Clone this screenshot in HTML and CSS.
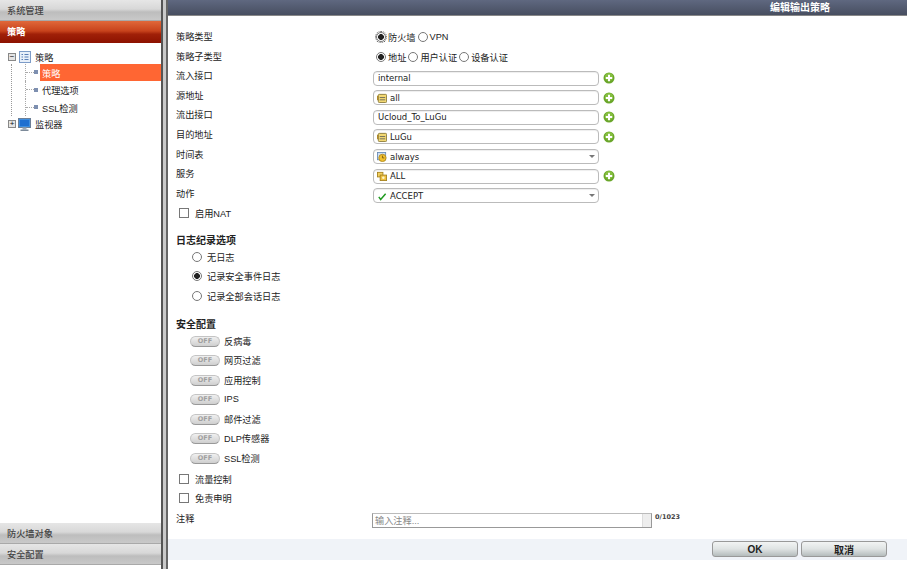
FILE: index.html
```html
<!DOCTYPE html>
<html lang="zh-CN">
<head>
  <meta charset="UTF-8">
  <title>编辑输出策略</title>
  <link rel="stylesheet" href="styles.css">
</head>
<body>
  <svg width="0" height="0" class="defs">
    <symbol id="plus" viewBox="0 0 12 12">
      <circle cx="6" cy="6" r="5.5" fill="#6aa62a"/>
      <circle cx="6" cy="5" r="4" fill="#86bf3f"/>
      <path d="M6 2.8v6.4M2.8 6h6.4" stroke="#fff" stroke-width="2"/>
    </symbol>
    <symbol id="addr" viewBox="0 0 11 11">
      <rect x="1.5" y="1.5" width="9" height="9" rx="1" fill="#f3d873" stroke="#8a7a3a"/>
      <path d="M3 5h6M3 7.5h6" stroke="#6b6b58"/>
      <rect x="0" y="3" width="1.5" height="5" fill="#b08a2a"/>
    </symbol>
  </svg>

  <aside class="sidebar">
    <div class="acc">系统管理</div>
    <div class="acc acc-active">策略</div>
    <div class="tree">
      <div class="tree-row top">
        <span class="box">−</span>
        <svg class="tree-icon" width="12" height="12" viewBox="0 0 12 12">
          <rect x="0.5" y="0.5" width="11" height="11" fill="#e8f0fa" stroke="#7d9cc8"/>
          <path d="M2.5 3.5h1.5M2.5 6h1.5M2.5 8.5h1.5M5.5 3.5h4M5.5 6h4M5.5 8.5h4" stroke="#5b7fb5"/>
        </svg>
        <span>策略</span>
      </div>
      <div class="tree-sub">
        <div class="tree-row leaf selected"><i class="dash"></i><i class="dot"></i><span class="leaf-text">策略</span></div>
        <div class="tree-row leaf"><i class="dash"></i><i class="dot"></i><span class="leaf-text">代理选项</span></div>
        <div class="tree-row leaf"><i class="dash"></i><i class="dot"></i><span class="leaf-text">SSL检测</span></div>
      </div>
      <div class="tree-row top">
        <span class="box">+</span>
        <svg class="tree-icon mon" width="13" height="13" viewBox="0 0 13 13">
          <rect x="0.5" y="0.5" width="12" height="9" fill="#3f8fe0" stroke="#6d7f96"/>
          <rect x="2" y="2" width="9" height="6" fill="#1f6fd0"/>
          <rect x="4.5" y="9.5" width="4" height="2" fill="#9aa7b5"/>
          <rect x="2.5" y="11.5" width="8" height="1.5" fill="#7c8a99"/>
        </svg>
        <span>监视器</span>
      </div>
    </div>
    <div class="acc-bottom">
      <div class="acc">防火墙对象</div>
      <div class="acc">安全配置</div>
    </div>
  </aside>
  <div class="splitter"></div>

  <main class="main">
    <header class="title-bar">编辑输出策略</header>
    <form class="form">
      <div class="row">
        <label class="lbl">策略类型</label>
        <div class="ctl radios">
          <i class="radio on focus"></i><span>防火墙</span>
          <i class="radio"></i><span>VPN</span>
        </div>
      </div>
      <div class="row">
        <label class="lbl">策略子类型</label>
        <div class="ctl radios">
          <i class="radio on"></i><span>地址</span>
          <i class="radio"></i><span>用户认证</span>
          <i class="radio"></i><span>设备认证</span>
        </div>
      </div>
      <div class="row">
        <label class="lbl">流入接口</label>
        <div class="ctl"><div class="field">internal</div><svg class="plus"><use href="#plus"/></svg></div>
      </div>
      <div class="row">
        <label class="lbl">源地址</label>
        <div class="ctl"><div class="field"><svg class="ico"><use href="#addr"/></svg>all</div><svg class="plus"><use href="#plus"/></svg></div>
      </div>
      <div class="row">
        <label class="lbl">流出接口</label>
        <div class="ctl"><div class="field">Ucloud_To_LuGu</div><svg class="plus"><use href="#plus"/></svg></div>
      </div>
      <div class="row">
        <label class="lbl">目的地址</label>
        <div class="ctl"><div class="field"><svg class="ico"><use href="#addr"/></svg>LuGu</div><svg class="plus"><use href="#plus"/></svg></div>
      </div>
      <div class="row">
        <label class="lbl">时间表</label>
        <div class="ctl"><div class="field">
          <svg class="ico" viewBox="0 0 11 11"><rect x="0.5" y="0.5" width="9" height="8" fill="#cfdff2" stroke="#6d8fb8"/><circle cx="6" cy="6.5" r="4" fill="#f0c030" stroke="#b08a20"/><path d="M6 4v2.5h2" stroke="#7a5a10" fill="none"/></svg>
          always<i class="caret"></i></div></div>
      </div>
      <div class="row">
        <label class="lbl">服务</label>
        <div class="ctl"><div class="field">
          <svg class="ico" viewBox="0 0 11 11"><rect x="0.5" y="1.5" width="6" height="5" fill="#f3d060" stroke="#a88420"/><rect x="3.5" y="4.5" width="7" height="6" fill="#efc040" stroke="#a88420"/><circle cx="7" cy="7.5" r="1.4" fill="#fff6c8"/></svg>
          ALL</div><svg class="plus"><use href="#plus"/></svg></div>
      </div>
      <div class="row">
        <label class="lbl">动作</label>
        <div class="ctl"><div class="field">
          <svg class="ico" viewBox="0 0 11 11"><path d="M2 6.5l2 2.8L9.5 3" fill="none" stroke="#1f9a1f" stroke-width="1.6"/></svg>
          ACCEPT<i class="caret"></i></div></div>
      </div>

      <div class="check nat"><i class="cb"></i><span>启用NAT</span></div>

      <h3 class="sec log-head">日志纪录选项</h3>
      <div class="opt"><i class="radio"></i><span>无日志</span></div>
      <div class="opt"><i class="radio on"></i><span>记录安全事件日志</span></div>
      <div class="opt"><i class="radio"></i><span>记录全部会话日志</span></div>

      <h3 class="sec sec-head">安全配置</h3>
      <div class="toggle-row"><i class="off">OFF</i><span>反病毒</span></div>
      <div class="toggle-row"><i class="off">OFF</i><span>网页过滤</span></div>
      <div class="toggle-row"><i class="off">OFF</i><span>应用控制</span></div>
      <div class="toggle-row"><i class="off">OFF</i><span>IPS</span></div>
      <div class="toggle-row"><i class="off">OFF</i><span>邮件过滤</span></div>
      <div class="toggle-row"><i class="off">OFF</i><span>DLP传感器</span></div>
      <div class="toggle-row"><i class="off">OFF</i><span>SSL检测</span></div>

      <div class="check first-check"><i class="cb"></i><span>流量控制</span></div>
      <div class="check"><i class="cb"></i><span>免责申明</span></div>

      <div class="comment">
        <label class="lbl">注释</label>
        <div class="textarea">输入注释...<i class="scroll"></i></div>
        <span class="count">0/1023</span>
      </div>
    </form>
    <footer class="foot">
      <button type="button" class="btn">OK</button>
      <button type="button" class="btn">取消</button>
    </footer>
  </main>
</body>
</html>
```
FILE: styles.css
```css
* {
  box-sizing: border-box;
}
html, body {
  height: 100%;
}
body {
  margin: 0;
  display: flex;
  height: 569px;
  overflow: hidden;
  background: #fff;
  color: #222;
  font-family: "Liberation Sans", "Noto Sans CJK SC", sans-serif;
  font-size: 9.2px;
}
i {
  font-style: normal;
}
.defs {
  position: absolute;
}

/* left menu */
.sidebar {
  width: 161px;
  height: 569px;
  display: flex;
  flex-direction: column;
  padding-bottom: 4px;
}
.acc {
  height: 21px;
  padding-left: 7px;
  line-height: 22px;
  color: #444;
  font-weight: 500;
  background: linear-gradient(#e6e6e6, #d8d8d8 45%, #bdbdbd 60%, #c9c9c9);
  border-bottom: 1px solid #a9a9a9;
}
.acc-active {
  height: 22px;
  line-height: 23px;
  color: #fff;
  font-weight: 700;
  background: linear-gradient(#e0683a, #c8431c 45%, #a02008 60%, #8c1200);
  border-bottom: 0;
}
.acc-bottom {
  margin-top: auto;
}
.tree {
  padding: 5px 0 0 8px;
}
.tree-row {
  display: flex;
  align-items: center;
  height: 18px;
}
.tree-row.top {
  height: 17px;
}
.box {
  width: 8px;
  height: 8px;
  margin-right: 3px;
  border: 1px solid #888;
  background: #e4e4e4;
  font-size: 8px;
  line-height: 6px;
  text-align: center;
  color: #111;
}
.tree-icon {
  margin-right: 4px;
}
.tree-icon.mon {
  margin-left: -1px;
}
.tree-sub {
  margin: -1.5px 0 -0.5px 3px;
  border-left: 1px dotted #999;
  padding-left: 13px;
}
.tree-sub .leaf {
  height: 17.5px;
  border-left: 1px dotted #aaa;
}
.dash {
  width: 8px;
  border-top: 1px dotted #aaa;
}
.dot {
  width: 4px;
  height: 4px;
  background: #7d8fb0;
}
.leaf-text {
  flex: 1;
  height: 100%;
  margin-left: 2px;
  padding-left: 2px;
  line-height: 20px;
}
.selected .leaf-text {
  background: #ff6633;
  color: #fff;
}

.splitter {
  width: 7px;
  height: 569px;
  border-left: 2px solid #555;
  border-right: 2px solid #666;
  background: #c9c9c9;
}

/* right side */
.main {
  flex: 1;
  display: flex;
  flex-direction: column;
  height: 569px;
}
.title-bar {
  height: 16px;
  padding-right: 77px;
  text-align: right;
  font-size: 10px;
  line-height: 15px;
  color: #fff;
  font-weight: 700;
  background: linear-gradient(#5f6880, #474e60);
  border-bottom: 1px solid #888;
}
.form {
  height: 523px;
  padding: 14px 0 0 8px;
}
.row {
  display: flex;
  height: 19.6px;
}
.lbl {
  width: 197px;
  line-height: 14px;
  flex: none;
}
.ctl {
  display: flex;
  align-items: center;
  height: 16px;
  margin-top: 1px;
}
.radios {
  gap: 2px;
  height: 14px;
  margin-top: 0;
  padding-left: 3px;
}
.radio {
  display: inline-block;
  width: 10px;
  height: 10px;
  border: 1px solid #777;
  border-radius: 50%;
  background: #fff;
}
.radio.on {
  background: radial-gradient(circle, #222 2.6px, #fff 3.2px);
}
.radio.focus {
  outline: 1px dotted #555;
  outline-offset: 0;
}
.field {
  position: relative;
  display: flex;
  align-items: center;
  width: 226px;
  height: 15px;
  padding-left: 4px;
  border: 1px solid #bbb;
  border-radius: 4px;
  background: #fff;
  font-family: "DejaVu Sans", sans-serif;
  font-size: 8.5px;
  box-shadow: inset 0 1px 1px #eee;
}
.ico {
  width: 10px;
  height: 10px;
  margin: 0 3px 0 -1px;
  flex: none;
}
.plus {
  width: 12px;
  height: 12px;
  margin-left: 4px;
}
.caret {
  position: absolute;
  right: 3px;
  top: 5px;
  width: 0;
  height: 0;
  border: 3px solid transparent;
  border-top-color: #777;
  border-bottom: 0;
}
.check {
  display: flex;
  align-items: center;
  gap: 6px;
  height: 19.6px;
  padding-left: 3px;
}
.nat {
  margin-top: -3px;
}
.first-check {
  margin-top: 1px;
}
.cb {
  width: 10px;
  height: 10px;
  border: 1px solid #777;
  background: #fff;
}
.sec {
  margin: 0 0 -2px;
  font-size: 10px;
  font-weight: 700;
  line-height: 16px;
}
.log-head {
  margin-top: 10px;
}
.sec-head {
  margin-top: 11px;
}
.opt {
  display: flex;
  align-items: center;
  gap: 5px;
  height: 19.6px;
  padding-left: 16px;
}
.toggle-row {
  display: flex;
  align-items: center;
  gap: 4px;
  height: 19.6px;
  padding-left: 14px;
}
.off {
  width: 30px;
  height: 11px;
  margin-top: 1px;
  border: 1px solid #c4c4c4;
  border-bottom-color: #999;
  border-radius: 6px;
  background: linear-gradient(#f0f0f0, #cfcfcf);
  color: #a0a0a0;
  font-size: 6.5px;
  font-weight: 700;
  line-height: 9px;
  text-align: center;
  font-family: "DejaVu Sans", sans-serif;
}
.comment {
  display: flex;
  height: 20px;
  margin-top: 5px;
}
.comment .lbl {
  width: 196px;
  line-height: 12px;
}
.textarea {
  position: relative;
  width: 280px;
  height: 15px;
  padding-left: 2px;
  border: 1px solid #999;
  border-top-color: #bbb;
  line-height: 14px;
  color: #888;
}
.scroll {
  position: absolute;
  top: 0;
  right: 0;
  bottom: 0;
  width: 9px;
  background: #eee;
  border-left: 1px solid #ddd;
}
.count {
  margin-left: 3px;
  font-family: "DejaVu Sans", sans-serif;
  font-size: 6.5px;
  font-weight: 700;
  line-height: 9px;
  color: #444;
}
.foot {
  height: 21px;
  background: #f0f3f8;
  display: flex;
  justify-content: flex-end;
  gap: 3px;
  padding: 2px 20px 0 0;
}
.btn {
  width: 86px;
  height: 16px;
  padding: 0;
  border: 1px solid #999;
  border-radius: 3px;
  background: linear-gradient(#f2f4f4, #dfe3e3 50%, #b5bcbc);
  font-family: "Liberation Sans", "Noto Sans CJK SC", sans-serif;
  font-size: 10px;
  font-weight: 700;
  color: #222;
}
```
